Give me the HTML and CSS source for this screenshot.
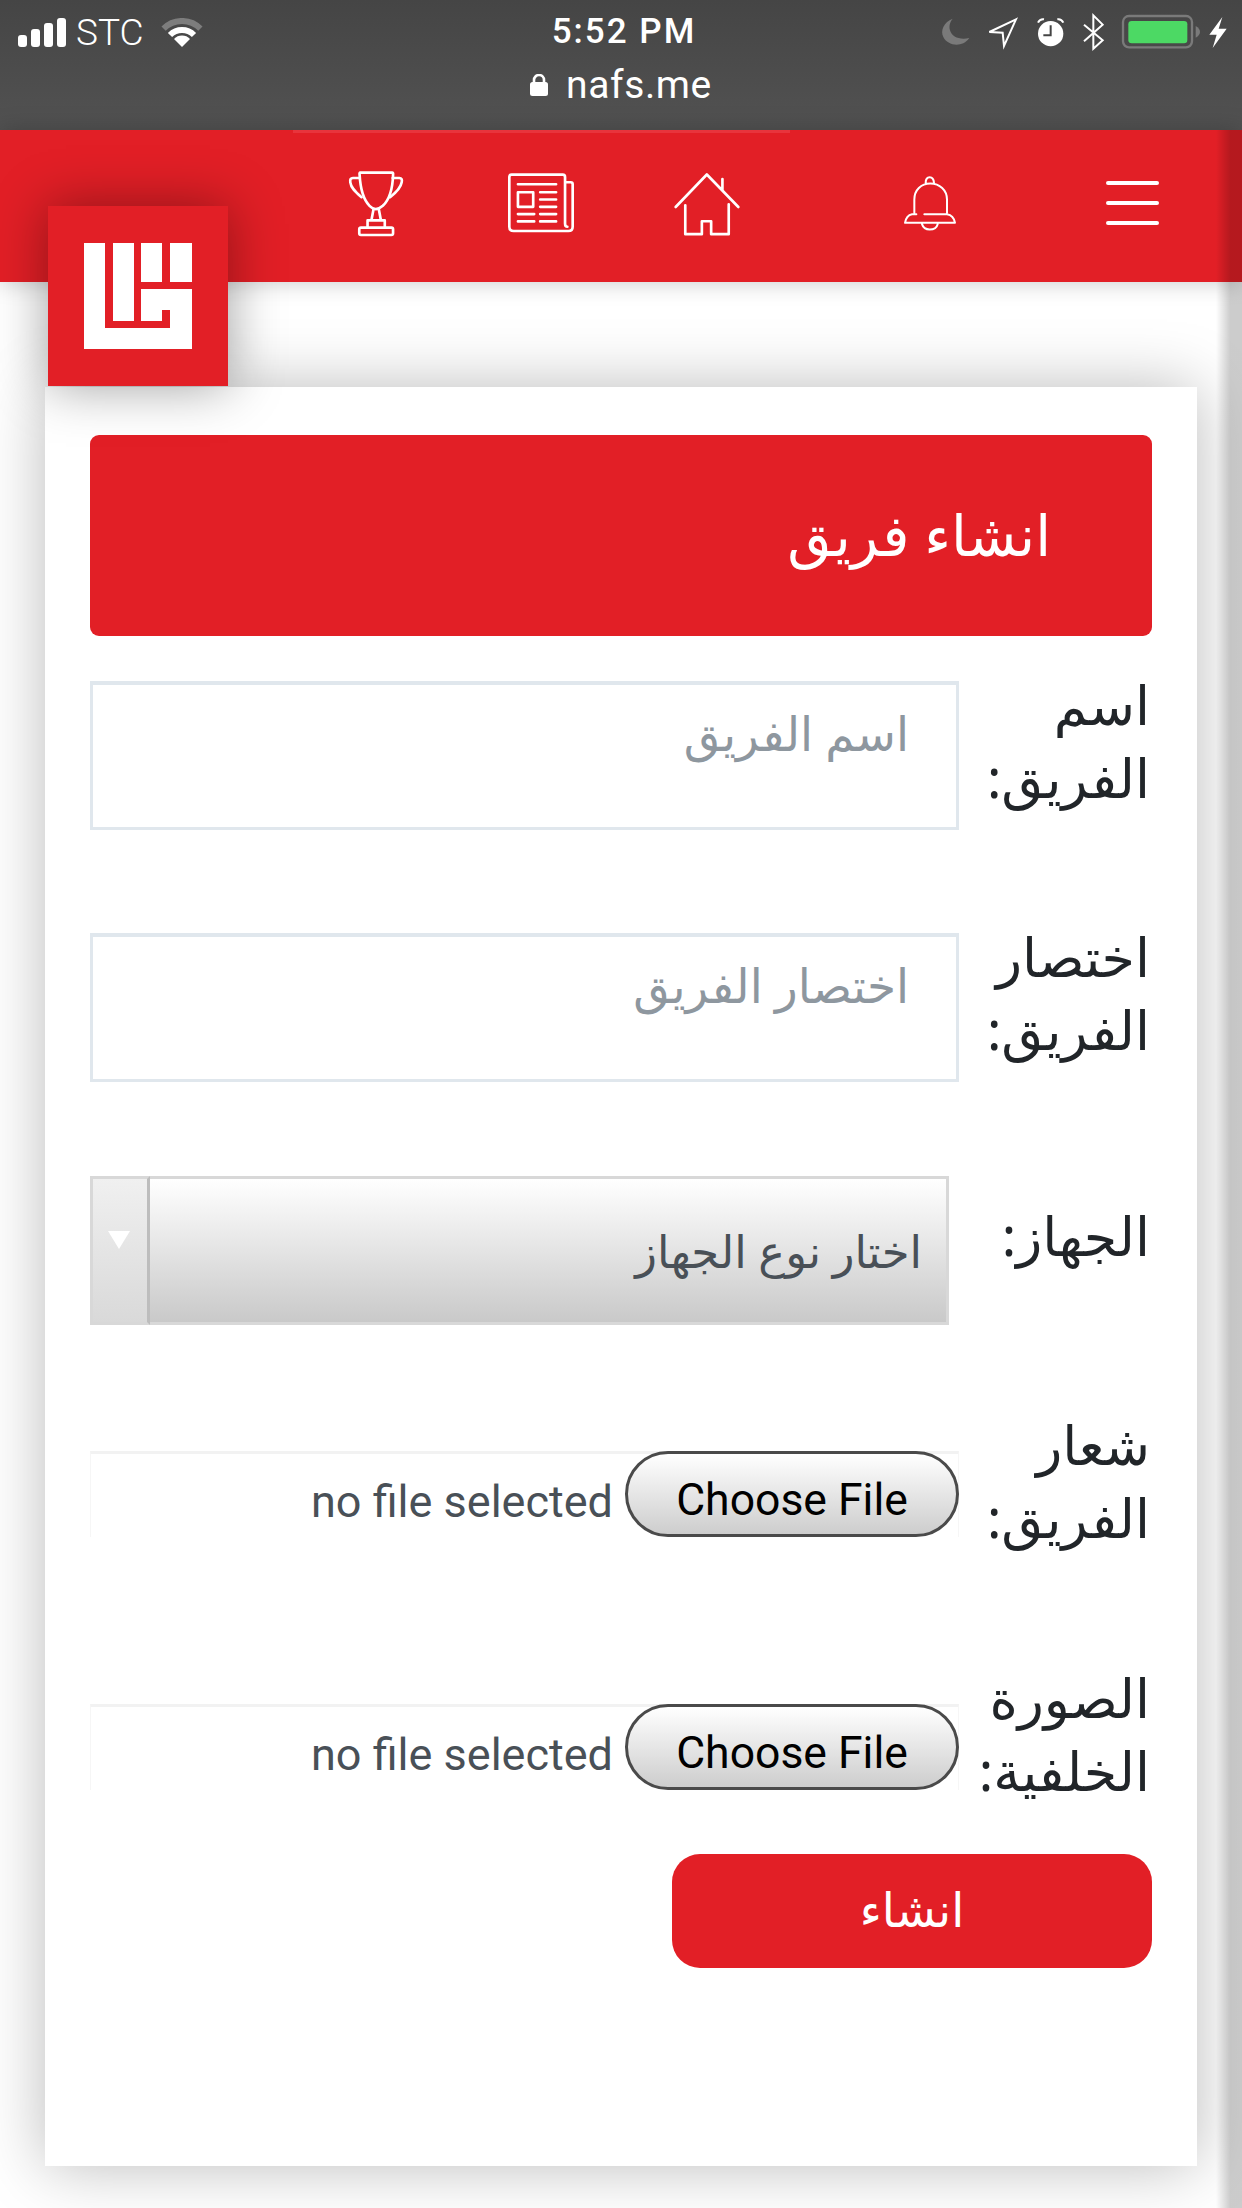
FILE: index.html
```html
<!DOCTYPE html>
<html lang="ar">
<head>
<meta charset="utf-8">
<title>انشاء فريق</title>
<link rel="stylesheet" href="styles.css">
</head>
<body>
<div class="app">
  <div class="status">
    <div class="status-top">
      <div class="status-left">
        <svg class="signal" viewBox="0 0 48 29"><rect x="0" y="17" width="9" height="12" rx="3"/><rect x="13" y="11" width="9" height="18" rx="3"/><rect x="26" y="5" width="9" height="24" rx="3"/><rect x="39" y="0" width="9" height="29" rx="3"/></svg>
        <span class="carrier">STC</span>
        <svg class="wifi" viewBox="0 0 42 29"><path class="wifi-dim" d="M2.6 10.6A26 26 0 0 1 39.4 10.6"/><path class="wifi-on" d="M9 17A17 17 0 0 1 33 17"/><path class="wifi-dot" d="M21 29L13 21A11 11 0 0 1 29 21Z"/></svg>
      </div>
      <span class="clock">5:52 PM</span>
      <div class="status-right">
        <svg class="sys" viewBox="30 30 870 120">
          <path class="grey" d="M68 50C42 60 30 85 40 105C52 130 95 140 118 108C90 115 65 105 60 85C56 72 60 60 68 50Z"/>
          <path class="line" d="M258 52L178 90L218 92L222 132Z"/>
          <circle class="solid" cx="362" cy="95" r="38"/>
          <path class="line" d="M324 62Q330 50 342 52M400 62Q394 50 382 52"/>
          <path class="hand" d="M362 70V100H340"/>
          <path class="line" d="M462 68L518 115L490 140V40L518 68L462 118"/>
          <rect class="cell" x="579" y="42" width="207" height="94" rx="18"/>
          <rect class="charge" x="595" y="57" width="177" height="67" rx="10"/>
          <path class="grey" d="M797 72Q810 80 810 90Q810 100 797 107Z"/>
          <path class="solid" d="M877 45L838 98H860L848 138L890 80H866Z"/>
        </svg>
      </div>
    </div>
    <div class="address">
      <svg class="lock" viewBox="0 0 18 22"><rect x="0" y="8" width="18" height="14" rx="2.5"/><path d="M4 9V6A5 5 0 0 1 14 6V9"/></svg>
      <span>nafs.me</span>
    </div>
  </div>

  <header class="topbar">
    <span class="progress"></span>
    <a class="logo" href="#" aria-label="nafs">
      <svg viewBox="0 0 108 106"><path d="M0 0H21V85H86V67H78V78H57V46H108V106H0Z"/><rect x="29" y="0" width="21" height="78"/><rect x="57" y="0" width="21" height="39"/><rect x="86" y="0" width="22" height="39"/></svg>
    </a>
    <nav class="nav">
      <svg class="ico ico-trophy" viewBox="50 60 175 205"><path d="M90 68H186Q190 68 189 74C188 110 182 145 158 168Q146 178 137 178Q128 178 118 168C95 145 90 110 88 74Q87 68 90 68Z"/><path d="M88 84H68Q58 84 60 97C62 115 78 128 94 142M188 84H208Q218 84 215 97C212 115 198 128 180 142"/><path d="M130 178L124 210M146 178L152 210"/><path d="M112 234V212H164V234"/><rect x="87" y="234" width="102" height="22" rx="5"/></svg>
      <svg class="ico ico-news" viewBox="530 68 205 185"><path d="M705 98H722Q728 98 728 104V232Q728 245 715 245H550Q537 245 537 232V82Q537 75 544 75H698Q705 75 705 82V222Q705 232 712 232"/><path d="M563 104H678M630 128H678M630 150H678M630 172H678M563 194H612M630 194H678M563 216H612M630 216H678"/><rect x="563" y="128" width="46" height="44"/></svg>
      <svg class="ico ico-home" viewBox="1028 62 205 198"><path d="M1036 170L1130 72L1225 170M1177 86V118M1065 165V252H1115V213H1143V252H1196V162"/></svg>
      <svg class="ico ico-bell" viewBox="68 75 162 170"><path d="M136 98Q136 81 148 81Q160 81 161 98M102 188V148C102 120 122 100 150 100C178 100 200 120 200 148V188M108 192H95Q78 195 74 218H224Q220 195 200 192H132M125 222Q130 238 148 238Q168 238 172 222"/></svg>
      <button class="burger" type="button" aria-label="menu"><span></span><span></span><span></span></button>
    </nav>
  </header>

  <main class="page">
    <section class="card">
      <h1 class="card-title">انشاء فريق</h1>
      <form class="form" dir="rtl">
        <div class="row row-name">
          <label class="row-label">اسم الفريق:</label>
          <input class="field" type="text" placeholder="اسم الفريق">
        </div>
        <div class="row row-short">
          <label class="row-label">اختصار الفريق:</label>
          <input class="field" type="text" placeholder="اختصار الفريق">
        </div>
        <div class="row row-device">
          <label class="row-label">الجهاز:</label>
          <div class="picker">
            <select class="picker-select"><option>اختار نوع الجهاز</option></select>
            <span class="picker-arrow"></span>
          </div>
        </div>
        <div class="row row-logo">
          <label class="row-label">شعار الفريق:</label>
          <div class="file"><button class="file-btn" type="button">Choose File</button><span class="file-name">no file selected</span></div>
        </div>
        <div class="row row-bg">
          <label class="row-label">الصورة الخلفية:</label>
          <div class="file"><button class="file-btn" type="button">Choose File</button><span class="file-name">no file selected</span></div>
        </div>
        <button class="submit" type="button">انشاء</button>
      </form>
    </section>
  </main>
  <div class="edge-shade"></div>
</div>
</body>
</html>
```
FILE: styles.css
```css
* { box-sizing: border-box; }
html, body { margin: 0; padding: 0; background: #fff; }
body { font-family: "Noto Sans", "DejaVu Sans", sans-serif; }
.app { position: relative; width: 1242px; height: 2208px; overflow: hidden; background: #fff; }

/* status bar */
.status { height: 130px; background: linear-gradient(#454545, #525252); color: #fff; font-family: Roboto, sans-serif; }
.status-top { display: grid; grid-template-columns: 1fr auto 1fr; align-items: center; height: 60px; padding: 0 12px 0 18px; }
.status-left { display: flex; align-items: center; gap: 10px; }
.signal { width: 48px; height: 29px; fill: #fff; margin-top: 2px; }
.carrier { margin-top: 3px; font-size: 37px; font-weight: 300; line-height: 60px; }
.wifi { width: 42px; height: 29px; margin-left: 7px; fill: none; margin-top: 2px; }
.wifi-dim { stroke: #7d7d7d; stroke-width: 6; }
.wifi-on { stroke: #fff; stroke-width: 6; }
.wifi-dot { fill: #fff; }
.clock { font-size: 35px; font-weight: 500; letter-spacing: 2px; line-height: 60px; }
.status-right { display: flex; justify-content: flex-end; }
.sys { width: 290px; height: 40px; }
.sys .grey { fill: #7a7a7a; }
.sys .solid { fill: #fff; }
.sys .line { fill: none; stroke: #fff; stroke-width: 6; }
.sys .hand { fill: none; stroke: #444; stroke-width: 6; }
.sys .cell { fill: none; stroke: #7a7a7a; stroke-width: 7; }
.sys .charge { fill: #4cd964; }
.address { display: flex; justify-content: center; align-items: center; gap: 18px; height: 50px; font-size: 39px; font-weight: 400; letter-spacing: .6px; }
.lock { width: 18px; height: 22px; fill: #fff; }
.lock path { fill: none; stroke: #fff; stroke-width: 2.6; }

/* header */
.topbar { position: relative; z-index: 3; height: 152px; background: #e21f26; box-shadow: 0 0 22px rgba(0, 0, 0, .22); }
.progress { position: absolute; left: 293px; top: 0; width: 497px; height: 3px; background: #e8343c; }
.logo { position: absolute; left: 48px; top: 76px; width: 180px; height: 180px; display: flex; align-items: center; justify-content: center; background: #e21f26; box-shadow: 0 0 50px rgba(0, 0, 0, .38); }
.logo svg { width: 108px; height: 106px; fill: #fff; }
.nav { display: flex; align-items: flex-start; height: 100%; padding: 40px 0 0 347px; }
.ico { display: block; fill: none; stroke: #fff; stroke-linecap: round; stroke-linejoin: round; stroke-width: 8; }
.ico-trophy { width: 58px; height: 68px; }
.ico-news { width: 68px; height: 62px; margin: 2px 0 0 102px; }
.ico-home { width: 68px; height: 66px; margin: 1px 0 0 98px; }
.ico-bell { width: 54px; height: 57px; margin: 5px 0 0 162px; stroke-width: 6; }
.burger { display: flex; flex-direction: column; gap: 16.5px; width: 53px; margin: 11px 0 0 149px; padding: 0; border: 0; background: none; }
.burger span { display: block; height: 3.5px; border-radius: 2px; background: #fff; }

/* card */
.page { padding: 105px 45px 0; }
.card { position: relative; z-index: 1; height: 1779px; padding: 48px 45px 0; background: #fff; box-shadow: 0 0 60px rgba(0, 0, 0, .27); }
.card-title { margin: 0; height: 201px; padding: 44px 101px 0 0; border-radius: 9px; background: #e21f26; color: #fff; text-align: right; font-size: 57px; font-weight: 400; line-height: 110px; direction: rtl; }

/* form rows */
.form { display: block; }
.row { display: flex; align-items: flex-start; }
.row-label { flex: none; width: 193px; padding-right: 2px; color: #212529; font-size: 54px; line-height: 73px; }
.row-name { margin-top: 32px; }
.row-short { margin-top: 90px; }
.row-device { margin-top: 94px; }
.row-logo { margin-top: 126px; }
.row-bg { margin-top: 150px; }
.row-name, .row-short { min-height: 162px; }
.field { display: block; width: 869px; height: 149px; margin-top: 13px; padding: 0 47px 46px; border: 3px solid #e0e7ed; border-top-width: 4px; background: #fff; color: #495057; font: inherit; font-size: 47px; }
.field::placeholder { color: #8e979f; opacity: 1; }
.row-device .row-label { margin-top: 23px; }
.picker { position: relative; width: 859px; height: 149px; margin-right: 10px; }
.picker-select { display: block; width: 100%; height: 100%; padding: 0 24px 0 0; border: 3px solid #d8d8d8; border-radius: 0; background: linear-gradient(#fff, #c9c9c9); color: #495057; font: inherit; font-size: 45px; appearance: none; -webkit-appearance: none; }
.picker-arrow { position: absolute; left: 0; top: 0; width: 60px; height: 149px; border: 3px solid #d8d8d8; border-right: 3px solid #bdbdbd; background: linear-gradient(#f0f0f0, #d9d9d9); }
.picker-arrow::after { content: ""; position: absolute; left: 15px; top: 52px; border-style: solid; border-width: 18px 11px 0; border-color: #fff transparent transparent; }
.row-logo .row-label, .row-bg .row-label { margin-top: -43px; }
.file { display: flex; align-items: center; width: 869px; height: 86px; border-top: 3px solid #f2f2f2; border-left: 1px solid #f6f6f6; border-right: 1px solid #f6f6f6; }
.file-btn { flex: none; width: 334px; height: 86px; margin: -3px -1px 0 0; padding: 12px 0 0; border: 3px solid #4a4a4a; border-radius: 48px; background: linear-gradient(#fff, #cdcdcd); color: #000; font-family: Roboto, sans-serif; font-size: 44.5px; }
.file-name { margin: 12px 12px 0 0; color: #495057; font-family: Roboto, sans-serif; font-size: 45px; }
.submit { display: block; width: 480px; height: 114px; margin-top: 47px; padding: 0 0 4px; border: 0; border-radius: 28px; background: #e21f26; color: #fff; font: inherit; font-size: 47px; }

/* off-canvas panel shade */
.edge-shade { position: absolute; z-index: 4; right: 0; top: 130px; bottom: 0; width: 26px; background: linear-gradient(90deg, rgba(0, 0, 0, 0), rgba(0, 0, 0, .2) 55%, rgba(0, 0, 0, .2)); }
```
